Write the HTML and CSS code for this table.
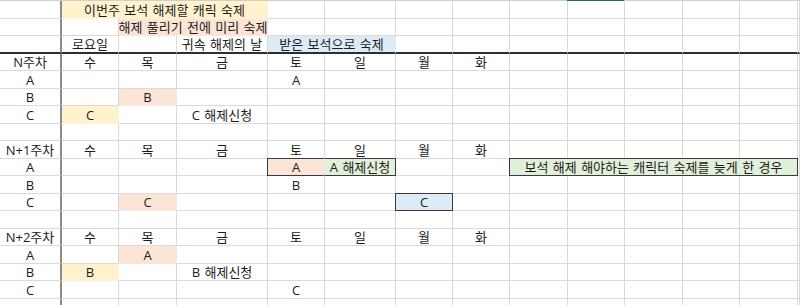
FILE: index.html
```html
<!DOCTYPE html>
<html lang="ko">
<head>
<meta charset="utf-8">
<title>보석 해제 숙제표</title>
<link rel="stylesheet" href="styles.css">
</head>
<body>
<div class="topbar"></div>
<div class="sheet">
  <!-- row 1 -->
  <div class="c a"></div><div class="c y s3">이번주 보석 해제할 캐릭 숙제</div><div class="c"></div><div class="c"></div><div class="c"></div><div class="c"></div><div class="c"></div><div class="c"></div><div class="c"></div><div class="c"></div><div class="c"></div><div class="c"></div>
  <!-- row 2 -->
  <div class="c a"></div><div class="c"></div><div class="c p s2">해제 풀리기 전에 미리 숙제</div><div class="c"></div><div class="c"></div><div class="c"></div><div class="c"></div><div class="c"></div><div class="c"></div><div class="c"></div><div class="c"></div><div class="c"></div><div class="c"></div>
  <!-- row 3 -->
  <div class="c a t"></div><div class="c t">로요일</div><div class="c t"></div><div class="c t">귀속 해제의 날</div><div class="c b s2 t">받은 보석으로 숙제</div><div class="c t"></div><div class="c t"></div><div class="c t"></div><div class="c t"></div><div class="c t"></div><div class="c t"></div><div class="c t"></div><div class="c t"></div>
  <!-- row 4 -->
  <div class="c a">N주차</div><div class="c">수</div><div class="c">목</div><div class="c">금</div><div class="c">토</div><div class="c">일</div><div class="c">월</div><div class="c">화</div><div class="c"></div><div class="c"></div><div class="c"></div><div class="c"></div><div class="c"></div><div class="c"></div>
  <!-- row 5 -->
  <div class="c a">A</div><div class="c"></div><div class="c"></div><div class="c"></div><div class="c">A</div><div class="c"></div><div class="c"></div><div class="c"></div><div class="c"></div><div class="c"></div><div class="c"></div><div class="c"></div><div class="c"></div><div class="c"></div>
  <!-- row 6 -->
  <div class="c a">B</div><div class="c"></div><div class="c p">B</div><div class="c"></div><div class="c"></div><div class="c"></div><div class="c"></div><div class="c"></div><div class="c"></div><div class="c"></div><div class="c"></div><div class="c"></div><div class="c"></div><div class="c"></div>
  <!-- row 7 -->
  <div class="c a">C</div><div class="c y">C</div><div class="c"></div><div class="c">C 해제신청</div><div class="c"></div><div class="c"></div><div class="c"></div><div class="c"></div><div class="c"></div><div class="c"></div><div class="c"></div><div class="c"></div><div class="c"></div><div class="c"></div>
  <!-- row 8 -->
  <div class="c a"></div><div class="c"></div><div class="c"></div><div class="c"></div><div class="c"></div><div class="c"></div><div class="c"></div><div class="c"></div><div class="c"></div><div class="c"></div><div class="c"></div><div class="c"></div><div class="c"></div><div class="c"></div>
  <!-- row 9 -->
  <div class="c a">N+1주차</div><div class="c">수</div><div class="c">목</div><div class="c">금</div><div class="c">토</div><div class="c">일</div><div class="c">월</div><div class="c">화</div><div class="c"></div><div class="c"></div><div class="c"></div><div class="c"></div><div class="c"></div><div class="c"></div>
  <!-- row 10 -->
  <div class="c a">A</div><div class="c"></div><div class="c"></div><div class="c"></div><div class="c p bx-l">A</div><div class="c g bx-r">A 해제신청</div><div class="c"></div><div class="c"></div><div class="c g bx s5">보석 해제 해야하는 캐릭터 숙제를 늦게 한 경우</div><div class="c"></div>
  <!-- row 11 -->
  <div class="c a">B</div><div class="c"></div><div class="c"></div><div class="c"></div><div class="c">B</div><div class="c"></div><div class="c"></div><div class="c"></div><div class="c"></div><div class="c"></div><div class="c"></div><div class="c"></div><div class="c"></div><div class="c"></div>
  <!-- row 12 -->
  <div class="c a">C</div><div class="c"></div><div class="c p">C</div><div class="c"></div><div class="c"></div><div class="c"></div><div class="c b bx">C</div><div class="c"></div><div class="c"></div><div class="c"></div><div class="c"></div><div class="c"></div><div class="c"></div><div class="c"></div>
  <!-- row 13 -->
  <div class="c a"></div><div class="c"></div><div class="c"></div><div class="c"></div><div class="c"></div><div class="c"></div><div class="c"></div><div class="c"></div><div class="c"></div><div class="c"></div><div class="c"></div><div class="c"></div><div class="c"></div><div class="c"></div>
  <!-- row 14 -->
  <div class="c a">N+2주차</div><div class="c">수</div><div class="c">목</div><div class="c">금</div><div class="c">토</div><div class="c">일</div><div class="c">월</div><div class="c">화</div><div class="c"></div><div class="c"></div><div class="c"></div><div class="c"></div><div class="c"></div><div class="c"></div>
  <!-- row 15 -->
  <div class="c a">A</div><div class="c"></div><div class="c p">A</div><div class="c"></div><div class="c"></div><div class="c"></div><div class="c"></div><div class="c"></div><div class="c"></div><div class="c"></div><div class="c"></div><div class="c"></div><div class="c"></div><div class="c"></div>
  <!-- row 16 -->
  <div class="c a">B</div><div class="c y">B</div><div class="c"></div><div class="c">B 해제신청</div><div class="c"></div><div class="c"></div><div class="c"></div><div class="c"></div><div class="c"></div><div class="c"></div><div class="c"></div><div class="c"></div><div class="c"></div><div class="c"></div>
  <!-- row 17 -->
  <div class="c a">C</div><div class="c"></div><div class="c"></div><div class="c"></div><div class="c">C</div><div class="c"></div><div class="c"></div><div class="c"></div><div class="c"></div><div class="c"></div><div class="c"></div><div class="c"></div><div class="c"></div><div class="c"></div>
  <!-- row 18 -->
  <div class="c a"></div><div class="c"></div><div class="c"></div><div class="c"></div><div class="c"></div><div class="c"></div><div class="c"></div><div class="c"></div><div class="c"></div><div class="c"></div><div class="c"></div><div class="c"></div><div class="c"></div><div class="c"></div>
</div>
</body>
</html>
```
FILE: styles.css
```css
html, body {
  margin: 0;
  padding: 0;
  background: #ffffff;
  overflow: hidden;
}

body {
  width: 800px;
  height: 305px;
  font-family: "Open Sans", "Noto Sans CJK KR", sans-serif;
  font-size: 13px;
  word-spacing: 1px;
  color: #1c1c1c;
}

.topbar {
  height: 1px;
  background: linear-gradient(to right, #cfcfcf 567px, #1e7145 567px, #1e7145 624px, #cfcfcf 624px);
}

.sheet {
  display: grid;
  grid-template-columns: 62px 57px 58px 91px 57px 71px 57px 57px 58px 57px 58px 57px 58px minmax(0, 1fr);
  grid-auto-rows: 17.5px;
  width: 800px;
}

.c {
  box-sizing: border-box;
  min-width: 0;
  border-right: 1px solid #dadada;
  border-bottom: 1px solid #dadada;
  display: flex;
  align-items: center;
  justify-content: center;
  white-space: nowrap;
  line-height: 16px;
  padding-top: 1px;
}

.a {
  border-right: 2px solid #8c8c8c;
}

.s2 { grid-column: span 2; }
.s3 { grid-column: span 3; }
.s5 { grid-column: span 5; }

.y { background: #fff2cc; border-color: #fff2cc; }
.p { background: #fce4d6; border-color: #fce4d6; }
.b { background: #ddebf7; border-color: #ddebf7; }
.g { background: #e2efda; border-color: #e2efda; }

.t { border-bottom: 2px solid #2e2e2e; }

.bx {
  border: 1px solid #3a3a3a;
  margin: -1px 0 0 -1px;
}

.bx-l {
  border-top: 1px solid #3a3a3a;
  border-left: 1px solid #3a3a3a;
  border-bottom-color: #3a3a3a;
  margin: -1px 0 0 -1px;
}

.bx-r {
  border-top: 1px solid #3a3a3a;
  border-right-color: #3a3a3a;
  border-bottom-color: #3a3a3a;
  margin-top: -1px;
}
```
